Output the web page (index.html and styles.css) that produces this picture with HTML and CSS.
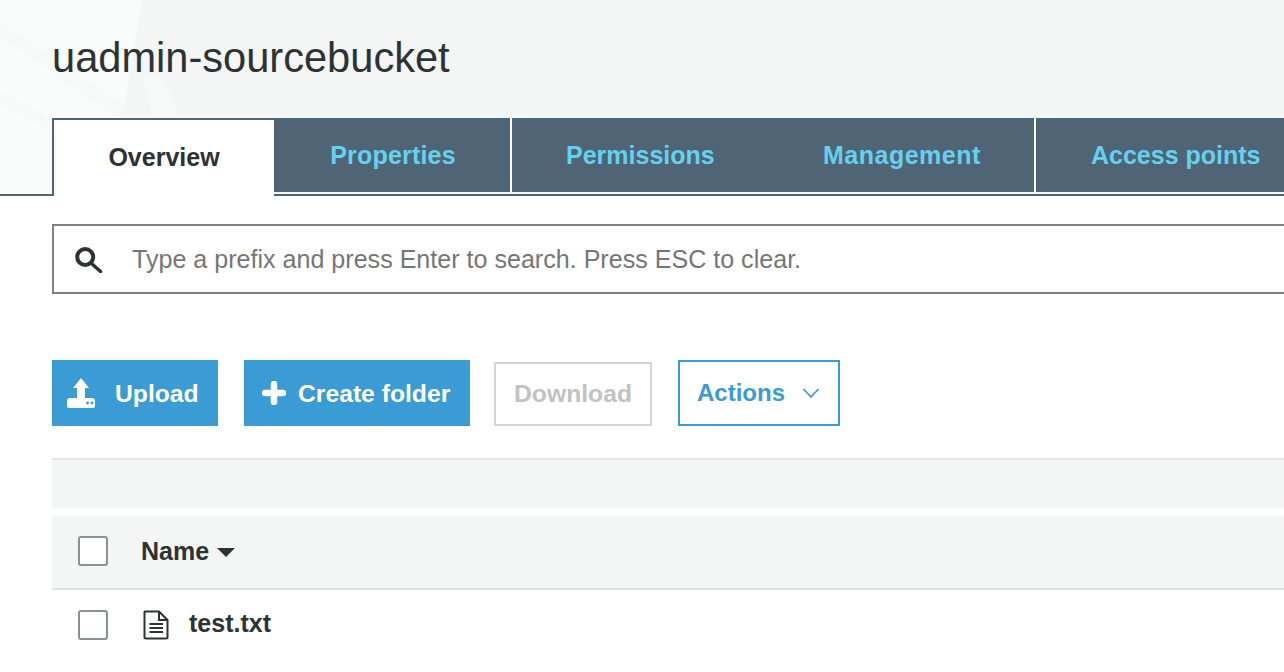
FILE: index.html
```html
<!DOCTYPE html>
<html>
<head>
    <link rel="stylesheet" href="styles.css">
</head>
<body>
    <header class="bucket-header">
        <!-- Faint watermark behind the title -->
        <svg class="watermark" width="190" height="194" viewBox="0 0 190 194">
            <path d="M0 0H142L124 105L119 118H52V194H0Z" fill="#fafbfb"/>
            <path d="M146 76C160 72 176 94 178 118H150C154 104 138 90 146 76Z" fill="#f7f9f9"/>
            <path d="M0 23L124 105L119 118L0 38Z" fill="#f7f9f9"/>
            <path d="M0 91L52 118V132L0 105Z" fill="#f7f9f9"/>
        </svg>
        <h1 class="bucket-title">uadmin-sourcebucket</h1>
        <nav class="tabs">
            <a class="tab active">Overview</a>
            <a class="tab properties">Properties</a>
            <a class="tab permissions">Permissions</a>
            <a class="tab management">Management</a>
            <a class="tab access">Access points</a>
        </nav>
    </header>

    <main class="content">
        <div class="search-box">
            <svg class="search-icon" width="28" height="28" viewBox="0 0 28 28">
                <circle cx="10.200" cy="12" r="8" fill="none" stroke="#2d3233" stroke-width="4"/>
                <path d="M16.500 18.500L25.500 26.500" stroke="#2d3233" stroke-width="3.500" stroke-linecap="round"/>
            </svg>
            <span class="search-hint">Type a prefix and press Enter to search. Press ESC to clear.</span>
        </div>

        <div class="toolbar">
            <button class="btn primary upload">
                <svg width="28" height="30" viewBox="0 0 28 30">
                    <path d="M14 0L22 10H18V20H10V10H6Z" fill="#fff"/>
                    <path d="M0 23Q0 20 3 20H25Q28 20 28 23V28Q28 30 26 30H2Q0 30 0 28Z" fill="#fff"/>
                    <circle cx="20.500" cy="25" r="1.400" fill="#3a9bd5"/>
                    <circle cx="25" cy="25" r="1.400" fill="#3a9bd5"/>
                </svg>
                Upload
            </button>
            <button class="btn primary create">
                <svg width="24" height="24" viewBox="0 0 24 24">
                    <path d="M12 3V21M3 12H21" stroke="#fff" stroke-width="6.500" stroke-linecap="round"/>
                </svg>
                Create folder
            </button>
            <button class="btn disabled">Download</button>
            <button class="btn outline">
                Actions
                <svg width="18" height="12" viewBox="0 0 18 12">
                    <path d="M1.500 2L9 10L16.500 2" fill="none" stroke="#3a9bd5" stroke-width="1.800"/>
                </svg>
            </button>
        </div>

        <div class="table-info"></div>

        <div class="table-head">
            <span class="checkbox"></span>
            <span class="col-name">Name</span>
            <span class="sort-caret"></span>
        </div>
        <div class="table-row">
            <span class="checkbox"></span>
            <svg class="file-icon" width="26" height="30" viewBox="0 0 26 30">
                <path d="M2 1.500H16L24.500 10V27Q24.500 28.500 23 28.500H3Q1.500 28.500 1.500 27V2Z" fill="none" stroke="#2d3233" stroke-width="2"/>
                <path d="M16 1.500V10H24.500" fill="none" stroke="#2d3233" stroke-width="2"/>
                <path d="M6.500 14H20M6.500 18H20M6.500 22H20" stroke="#2d3233" stroke-width="1.800"/>
            </svg>
            <span class="file-name">test.txt</span>
        </div>
    </main>
</body>
</html>
```

FILE: styles.css
```css
html, body {
    margin: 0;
    padding: 0;
}

body {
    width: 1284px;
    height: 672px;
    overflow: hidden;
    background: #fff;
    color: #2d3233;
    font-family: "Liberation Sans", Arial, sans-serif;
}

.bucket-header {
    position: relative;
    height: 196px;
    box-sizing: border-box;
    padding: 34px 0 0 52px;
    background: #f4f6f6;
    overflow: hidden;
}

.watermark {
    position: absolute;
    top: 0;
    left: 0;
}

.bucket-title {
    position: relative;
    margin: 0;
    height: 84px;
    font-size: 41.600px;
    line-height: 48px;
    font-weight: 400;
}

/* Tabs */
.tabs {
    position: relative;
    display: flex;
    height: 78px;
    margin-left: -52px;
    padding-left: 52px;
    box-sizing: border-box;
    border-bottom: 2px solid #4f6575;
}

.tab {
    display: flex;
    justify-content: center;
    box-sizing: border-box;
    height: 74px;
    padding-top: 21px;
    background: #4f6575;
    color: #66d0f0;
    font-size: 25px;
    line-height: 32px;
    font-weight: 700;
}

.tab.active {
    width: 222px;
    height: 78px;
    margin-bottom: -2px;
    padding-top: 21px;
    background: #fff;
    color: #2d3233;
    border-top: 2px solid #4f6575;
    border-left: 2px solid #4f6575;
}

.tab.properties {
    width: 238px;
    padding-left: 2px;
    letter-spacing: 0.2px;
    border-right: 2px solid #fff;
}

.tab.permissions {
    width: 262px;
    justify-content: flex-start;
    padding-left: 54px;
}

.tab.management {
    width: 263px;
    justify-content: flex-start;
    padding-left: 50px;
    margin-left: -1px;
    letter-spacing: 0.5px;
    border-right: 2px solid #fff;
}

.tab.access {
    flex: 1;
    justify-content: flex-start;
    padding-left: 55px;
}

/* Main content */
.content {
    padding: 28px 0 0 52px;
}

.search-box {
    display: flex;
    align-items: center;
    box-sizing: border-box;
    height: 70px;
    border: 2px solid #808080;
    border-right: 0;
    padding-left: 21px;
}

.search-icon {
    flex: none;
    margin-right: 29px;
}

.search-hint {
    color: #767676;
    font-size: 25.080px;
    line-height: 32px;
}

.toolbar {
    display: flex;
    align-items: center;
    gap: 26px;
    margin-top: 66px;
}

.btn {
    display: flex;
    align-items: center;
    box-sizing: border-box;
    height: 66px;
    padding: 0;
    border: 0;
    font-family: inherit;
    font-size: 24.700px;
    font-weight: 700;
}

.btn.primary {
    padding-top: 1px;
    background: #3a9bd5;
    color: #fff;
}

.btn.primary svg {
    margin-bottom: 1px;
}

.upload {
    width: 166px;
    padding-left: 15px;
    gap: 20px;
}

.create {
    width: 226px;
    padding-left: 18px;
    gap: 12px;
}

.btn.disabled {
    align-self: flex-end;
    width: 158px;
    height: 64px;
    justify-content: center;
    margin-left: -2px;
    padding-bottom: 1px;
    background: #fff;
    color: #c2c2c2;
    border: 2px solid #d5d5d5;
}

.btn.outline {
    width: 162px;
    background: #fff;
    color: #3a9bd5;
    border: 2px solid #3a9bd5;
    padding-left: 17px;
    gap: 17px;
    font-size: 24px;
}

/* Table */
.table-info {
    height: 48px;
    margin-top: 32px;
    background: #f4f6f6;
    border-top: 2px solid #e2e4e4;
}

.table-head {
    display: flex;
    align-items: center;
    box-sizing: border-box;
    height: 74px;
    margin-top: 8px;
    padding-left: 26px;
    padding-bottom: 2px;
    background: #f4f6f6;
    border-bottom: 2px solid #dfe1e1;
}

.table-row {
    display: flex;
    align-items: center;
    height: 69px;
    padding-left: 26px;
}

.checkbox {
    flex: none;
    box-sizing: border-box;
    width: 30px;
    height: 30px;
    background: #fff;
    border: 2px solid #879196;
    border-radius: 3px;
}

.col-name {
    margin-left: 33px;
    font-size: 25px;
    font-weight: 700;
}

.sort-caret {
    width: 0;
    height: 0;
    margin: 3px 0 0 8px;
    border-left: 9px solid transparent;
    border-right: 9px solid transparent;
    border-top: 9px solid #2d3233;
}

.file-icon {
    flex: none;
    margin-left: 35px;
}

.file-name {
    margin-left: 20px;
    padding-bottom: 3px;
    font-size: 25px;
    font-weight: 700;
}
```
